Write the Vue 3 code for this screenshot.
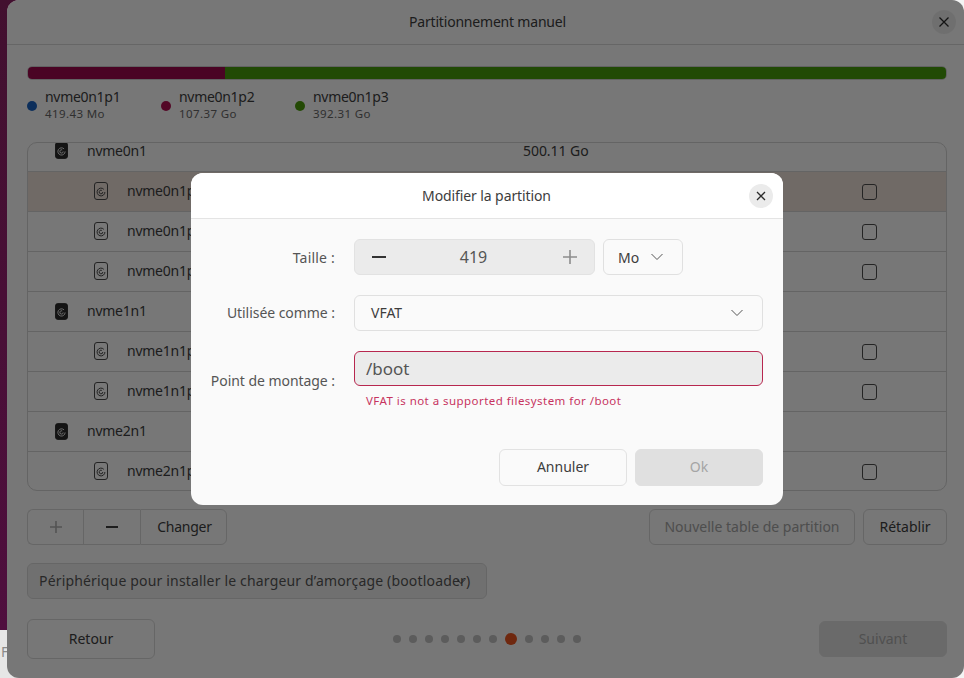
<script setup>
const legend = [
  { name: 'nvme0n1p1', size: '419.43 Mo', color: '#1a62c0' },
  { name: 'nvme0n1p2', size: '107.37 Go', color: '#b01050' },
  { name: 'nvme0n1p3', size: '392.31 Go', color: '#4a9a0a' }
]
const rows = [
  { name: 'nvme0n1', disk: true, size: '500.11 Go', clipped: true },
  { name: 'nvme0n1p1', selected: true },
  { name: 'nvme0n1p2' },
  { name: 'nvme0n1p3' },
  { name: 'nvme1n1', disk: true },
  { name: 'nvme1n1p1' },
  { name: 'nvme1n1p2' },
  { name: 'nvme2n1', disk: true },
  { name: 'nvme2n1p1' }
]
const before = 7
const after = 4
</script>

<template>
  <div class="desktop">
    <div class="strip">
      <div class="wall"></div>
      <div class="dock">F</div>
    </div>
    <div class="window">
      <header class="titlebar">
        <span class="title">Partitionnement manuel</span>
        <button class="close main-close">
          <svg width="12" height="12" viewBox="0 0 12 12"><path d="M1.5 1.5l9 9M10.5 1.5l-9 9" /></svg>
        </button>
      </header>
      <div class="content">
        <div class="usage"><div class="seg seg-a"></div><div class="seg seg-b"></div></div>
        <div class="legend">
          <div v-for="l in legend" :key="l.name" class="legend-item">
            <span class="dot" :style="{ background: l.color }"></span>
            <div class="legend-text">
              <div class="legend-name">{{ l.name }}</div>
              <div class="legend-size">{{ l.size }}</div>
            </div>
          </div>
        </div>
        <div class="table">
          <div
            v-for="r in rows"
            :key="r.name"
            class="row"
            :class="{ selected: r.selected, disk: r.disk, clipped: r.clipped }"
          >
            <svg class="drive" :class="{ solid: r.disk }" width="14" height="18" viewBox="0 0 14 18">
              <rect x="0.5" y="0.5" width="13" height="17" rx="2.500" class="case" />
              <path d="M9.800 7.300A3.900 3.900 0 1 0 10.900 10" class="ring" />
              <path d="M8.800 10a1.800 1.800 0 1 1-1-1.600" class="ring" />
            </svg>
            <span class="row-name">{{ r.name }}</span>
            <span v-if="r.size" class="row-size">{{ r.size }}</span>
            <span v-if="!r.disk" class="check"></span>
          </div>
        </div>
        <div class="toolbar">
          <div class="linked">
            <button class="btn tool muted-sign">
              <svg width="14" height="14" viewBox="0 0 14 14"><path d="M7 1v12M1 7h12" /></svg>
            </button>
            <button class="btn tool">
              <svg width="14" height="14" viewBox="0 0 14 14"><path d="M1 7h12" /></svg>
            </button>
            <button class="btn change">Changer</button>
          </div>
          <div class="spacer"></div>
          <button class="btn new-table" disabled>Nouvelle table de partition</button>
          <button class="btn restore">Rétablir</button>
        </div>
        <div class="boot">
          <span>Périphérique pour installer le chargeur d’amorçage (bootloader)</span>
          <svg class="boot-chevron" width="10" height="7" viewBox="0 0 10 7"><path d="M1 1.500l4 4 4-4" /></svg>
        </div>
        <div class="nav">
          <button class="btn back">Retour</button>
          <div class="dots">
            <span v-for="n in before" :key="'a' + n" class="step"></span>
            <span class="step current"></span>
            <span v-for="n in after" :key="'b' + n" class="step"></span>
          </div>
          <button class="btn next" disabled>Suivant</button>
        </div>
      </div>
      <div class="scrim"></div>
      <div class="modal">
        <header class="modal-head">
          <span class="modal-title">Modifier la partition</span>
          <button class="close modal-close">
            <svg width="10" height="10" viewBox="0 0 10 10"><path d="M1 1l8 8M9 1l-8 8" /></svg>
          </button>
        </header>
        <div class="modal-body">
          <div class="field size-field">
            <label>Taille :</label>
            <div class="spin">
              <svg class="spin-minus" width="14" height="14" viewBox="0 0 14 14"><path d="M0 7h14" /></svg>
              <span class="spin-value">419</span>
              <svg class="spin-plus" width="14" height="14" viewBox="0 0 14 14"><path d="M7 0v14M0 7h14" /></svg>
            </div>
            <div class="unit">
              <span>Mo</span>
              <svg class="chev" width="12" height="8" viewBox="0 0 12 8"><path d="M0.500 1l5.500 5.500L11.500 1" /></svg>
            </div>
          </div>
          <div class="field use-field">
            <label>Utilisée comme :</label>
            <div class="select">
              <span>VFAT</span>
              <svg class="chev" width="12" height="8" viewBox="0 0 12 8"><path d="M0.500 1l5.500 5.500L11.500 1" /></svg>
            </div>
          </div>
          <div class="field mount-field">
            <label>Point de montage :</label>
            <div class="mount">/boot</div>
          </div>
          <div class="error">VFAT is not a supported filesystem for /boot</div>
          <div class="actions">
            <button class="btn cancel">Annuler</button>
            <button class="btn ok" disabled>Ok</button>
          </div>
        </div>
      </div>
    </div>
  </div>
</template>

<style>
html, body { margin: 0; padding: 0; background: #f4f4f4; overflow: hidden; }
</style>

<style scoped>
.desktop {
  width: 964px;
  height: 678px;
  display: flex;
  overflow: hidden;
  font-family: "Noto Sans", "Open Sans", sans-serif;
  font-size: 14px;
  color: #3d3d3d;
}
button { font-family: inherit; font-size: inherit; color: inherit; margin: 0; padding: 0; }
.strip { width: 24px; margin-right: -17px; flex: none; display: flex; flex-direction: column; }
.wall { height: 630px; background: linear-gradient(180deg, #42102f, #4f0e3e); }
.dock { flex: 1; background: #e6e6e6; color: #8a8a8a; font-size: 14px; padding: 12px 0 0 1px; }
.window {
  position: relative;
  z-index: 1;
  flex: 1;
  background: #fafafa;
  border-radius: 12px;
  overflow: hidden;
  display: flex;
  flex-direction: column;
}
.titlebar {
  height: 44px;
  flex: none;
  border-bottom: 1px solid #d8d8d8;
  display: flex;
  align-items: center;
  justify-content: center;
  position: relative;
  box-sizing: content-box;
}
.title { font-size: 14px; letter-spacing: -0.2px; margin-left: 4px; padding-bottom: 1px; }
.close {
  position: absolute;
  width: 24px;
  height: 24px;
  border: 0;
  border-radius: 50%;
  background: #ebebeb;
  display: flex;
  align-items: center;
  justify-content: center;
}
.close svg path { stroke: #2b2b2b; stroke-width: 1.3; fill: none; }
.main-close { right: 8px; top: 10px; }
.content { padding: 21px 17px 0 20px; display: flex; flex-direction: column; }
.usage { height: 12px; display: flex; border: 1px solid #cfcfcf; border-radius: 5px; overflow: hidden; }
.seg-a { width: 197px; background: #9c0a4c; }
.seg-b { flex: 1; background: #469c0c; }
.legend { display: flex; height: 62px; align-items: flex-start; padding-top: 7px; box-sizing: border-box; }
.legend-item { width: 134px; display: flex; align-items: center; gap: 8px; }
.dot { width: 10px; height: 10px; border-radius: 50%; margin-top: 2px; }
.legend-name { font-size: 14px; line-height: 19px; letter-spacing: -0.3px; }
.legend-size { font-size: 11.500px; line-height: 16px; color: #666; letter-spacing: 0.4px; }
.table {
  height: 349px;
  box-sizing: border-box;
  border: 1px solid #d2d2d2;
  border-radius: 10px;
  overflow: hidden;
}
.row {
  height: 40px;
  box-sizing: border-box;
  border-bottom: 1px solid #d2d2d2;
  display: flex;
  align-items: center;
  position: relative;
  padding-left: 66px;
  padding-bottom: 1px;
}
.row:last-child { border-bottom: 0; height: 39px; }
.row.clipped { height: 41px; margin-top: -12px; }
.row.selected { background: #ecdfd8; }
.row.disk { padding-left: 27px; }
.drive { flex: none; }
.row.disk .drive { width: 13px; height: 17px; }
.case { fill: none; stroke: #4a4a4a; stroke-width: 1; }
.ring { fill: none; stroke: #4a4a4a; stroke-width: 1; }
.solid .case { fill: #2a2a2a; stroke: #2a2a2a; }
.solid .ring { stroke: #f0f0f0; }
.row-name { margin-left: 19px; letter-spacing: -0.25px; line-height: 16px; }
.row-size { position: absolute; left: 495px; letter-spacing: -0.05px; line-height: 16px; }
.check {
  position: absolute;
  left: 834px;
  top: 12px;
  width: 15px;
  height: 16px;
  box-sizing: border-box;
  border: 1px solid #4d4d4d;
  border-radius: 3px;
}
.btn {
  border: 1px solid #d8d8d8;
  border-radius: 6px;
  background: #fafafa;
  box-sizing: border-box;
  display: flex;
  align-items: center;
  justify-content: center;
  padding-bottom: 2px;
}
.toolbar { display: flex; height: 36px; margin-top: 18px; }
.linked { display: flex; }
.tool { height: 36px; border-radius: 0; border-right: 0; padding-bottom: 0; }
.linked .tool:nth-child(1) { width: 56px; border-radius: 6px 0 0 6px; }
.linked .tool:nth-child(2) { width: 57px; }
.tool svg path { stroke: #3d3d3d; stroke-width: 2; fill: none; }
.muted-sign svg path { stroke: #b0b0b0; stroke-width: 1.6; }
.change { width: 87px; height: 36px; border-radius: 0 6px 6px 0; letter-spacing: -0.25px; padding-left: 2px; }
.spacer { flex: 1; }
.new-table { width: 206px; height: 36px; color: #a4a4a4; margin-right: 8px; }
.restore { width: 84px; height: 36px; }
.boot {
  width: 460px;
  height: 36px;
  margin-top: 18px;
  box-sizing: border-box;
  border: 1px solid #d8d8d8;
  border-radius: 6px;
  background: #ededed;
  display: flex;
  align-items: center;
  padding: 0 0 2px 11px;
  position: relative;
  color: #555;
  white-space: nowrap;
  letter-spacing: 0.17px;
}
.boot-chevron { position: absolute; left: 428px; top: 14px; }
.boot-chevron path { stroke: #3d3d3d; fill: none; stroke-width: 1; }
.nav { display: flex; align-items: center; margin-top: 20px; justify-content: space-between; }
.back { width: 128px; height: 40px; }
.next { width: 128px; height: 36px; background: #e0e0e0; border-color: #e0e0e0; color: #a8a8a8; }
.dots { display: flex; align-items: center; gap: 8px; }
.step { width: 8px; height: 8px; border-radius: 50%; background: #c2c2c2; }
.step.current { width: 12px; height: 12px; background: #e95420; }
.scrim { position: absolute; inset: 0; background: rgba(0, 0, 0, 0.525); }
.modal {
  position: absolute;
  left: 184px;
  top: 173px;
  width: 592px;
  height: 332px;
  background: #fafafa;
  border-radius: 12px;
  overflow: hidden;
  display: flex;
  flex-direction: column;
}
.modal-head {
  height: 45px;
  flex: none;
  background: #fff;
  border-bottom: 1px solid #e4e4e4;
  display: flex;
  align-items: center;
  justify-content: center;
  position: relative;
  box-sizing: content-box;
}
.modal-title { letter-spacing: -0.1px; margin-left: -1px; }
.modal-close { right: 10px; top: 11px; }
.modal-body { padding-top: 20px; }
.field { display: flex; align-items: center; }
.field label { width: 144px; text-align: right; color: #555; margin-right: 19px; letter-spacing: -0.05px; }
.size-field label { letter-spacing: 0.2px; }
.spin {
  width: 241px;
  height: 36px;
  box-sizing: border-box;
  background: #ebebeb;
  border: 1px solid #e2e2e2;
  border-radius: 6px;
  display: flex;
  align-items: center;
  justify-content: space-between;
  padding: 0 17px;
}
.spin-minus path { stroke: #333; stroke-width: 2; fill: none; }
.spin-plus path { stroke: #8d8d8d; stroke-width: 1.6; fill: none; }
.spin-value { font-size: 16px; color: #555; margin-right: 2px; }
.unit {
  width: 80px;
  height: 36px;
  margin-left: 8px;
  box-sizing: border-box;
  border: 1px solid #e0e0e0;
  border-radius: 6px;
  display: flex;
  align-items: center;
  padding: 0 19px 0 14px;
  justify-content: space-between;
}
.chev path { stroke: #555; stroke-width: 1; fill: none; }
.use-field { margin-top: 20px; }
.use-field label { padding-bottom: 2px; }
.select {
  width: 409px;
  height: 36px;
  box-sizing: border-box;
  border: 1px solid #e0e0e0;
  border-radius: 6px;
  display: flex;
  align-items: center;
  justify-content: space-between;
  padding: 0 19px 0 16px;
}
.select span { padding-bottom: 2px; }
.mount-field { margin-top: 20px; }
.mount-field label { position: relative; top: 12px; }
.mount {
  width: 409px;
  height: 35px;
  box-sizing: border-box;
  background: #ebebeb;
  border: 1px solid #b7274f;
  border-radius: 6px;
  padding-left: 11px;
  font-size: 17px;
  line-height: 33px;
  color: #555;
}
.error {
  margin: 7px 0 0 175px;
  font-size: 11.500px;
  line-height: 16px;
  color: #c7345f;
  letter-spacing: 0.45px;
}
.actions { display: flex; justify-content: flex-end; gap: 8px; padding-right: 20px; margin-top: 40px; }
.cancel, .ok { width: 128px; height: 37px; }
.cancel { border-color: #e2e2e2; }
.ok { background: #e0e0e0; border-color: #e0e0e0; color: #a5a5a5; }
</style>
